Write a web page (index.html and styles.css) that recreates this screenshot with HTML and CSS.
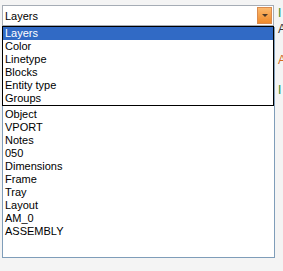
FILE: index.html
```html
<!DOCTYPE html>
<html lang="en">
<head>
  <meta charset="UTF-8">
  <title>Layers</title>
  <link rel="stylesheet" href="styles.css">
</head>
<body>

<div class="panel">
  <div class="left">
    <div class="combo">
      <span class="combo-value">Layers</span>
      <span class="combo-btn"><span class="arrow"></span></span>
    </div>

    <ul class="dropdown">
      <li class="selected">Layers</li>
      <li>Color</li>
      <li>Linetype</li>
      <li>Blocks</li>
      <li>Entity type</li>
      <li>Groups</li>
    </ul>

    <ul class="listbox">
      <li>Object</li>
      <li>VPORT</li>
      <li>Notes</li>
      <li>050</li>
      <li>Dimensions</li>
      <li>Frame</li>
      <li>Tray</li>
      <li>Layout</li>
      <li>AM_0</li>
      <li>ASSEMBLY</li>
    </ul>
  </div>

  <div class="side">
    <span class="tag green">I</span>
    <span class="tag dark">A</span>
    <span class="tag orange">A</span>
    <span class="tag green">I</span>
  </div>
</div>

</body>
</html>
```

FILE: styles.css
```css
body {
  margin: 0;
  background: #f4f4f4;
  font-family: "Liberation Sans", Arial, sans-serif;
  font-size: 11px;
  overflow: hidden;
}

.panel {
  display: flex;
  padding: 5px 0 0 2px;
  height: 266px;
}

.left {
  position: relative;
  width: 272px;
  flex: none;
}

.combo {
  display: flex;
  align-items: center;
  height: 19px;
  border: 1px solid #a5acb5;
  background: white;
}

.combo-value {
  flex: 1;
  padding-left: 2px;
  color: #000;
}

.combo-btn {
  width: 15px;
  height: 17px;
  margin-right: 1px;
  display: flex;
  align-items: center;
  justify-content: center;
  background: linear-gradient(#fbb86d, #f08a2a);
  border: 1px solid #d98a4e;
  box-sizing: border-box;
}

.arrow {
  width: 0;
  height: 0;
  border-left: 3px solid transparent;
  border-right: 3px solid transparent;
  border-top: 3px solid #4d3a2a;
}

ul {
  list-style: none;
  margin: 0;
  padding: 0;
}

li {
  height: 13px;
  line-height: 13px;
  padding-left: 2px;
  white-space: nowrap;
}

.dropdown {
  position: absolute;
  top: 21px;
  left: 0;
  right: 0;
  background: white;
  border: 1px solid #000;
  z-index: 2;
}

.dropdown .selected {
  background: #316ac5;
  color: white;
}

.listbox {
  margin-top: 1px;
  height: 231px;
  padding-top: 80px;
  box-sizing: border-box;
  background: white;
  border: 1px solid #7f9db9;
  margin-right: -1px;
}

.side {
  display: flex;
  flex-direction: column;
  padding-left: 4px;
  font-size: 12px;
}

.tag {
  height: 16px;
  line-height: 16px;
}

.tag.green { color: #2e8b2e; }
.tag.dark { color: #333; }
.tag.orange { color: #d2691e; margin-top: 15px; }
.tag.orange + .tag.green { margin-top: 14px; }
```
